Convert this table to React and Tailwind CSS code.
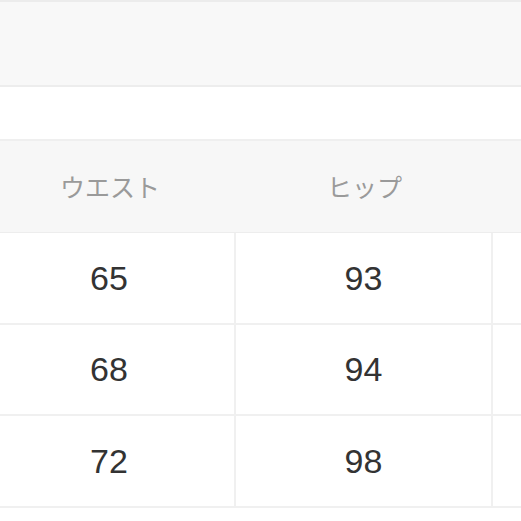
import React from 'react'

const rows = [
  { h: 'h-[92px]', cells: ['65', '93', ''] },
  { h: 'h-[91px]', cells: ['68', '94', ''] },
  { h: 'h-[92px]', cells: ['72', '98', ''] },
]

export default function App() {
  return (
    <div className="w-[521px] h-[521px] overflow-hidden bg-white" style={{ fontFamily: '"Liberation Sans", "Noto Sans CJK JP", sans-serif' }}>
      <div className="h-[2px] bg-[#ececec]" />
      <div className="h-[85px] bg-[#f8f8f8] border-b-2 border-[#ededed]" />
      <div className="h-[54px] bg-white border-b-2 border-[#efefef]" />
      <div className="-ml-[16px] w-[800px]">
        <div className="grid grid-cols-[252px_257px_257px] h-[92px] bg-[#f7f7f7] border-b border-[#ededed]">
          <div className="flex items-center justify-center text-[25px] text-[#9a9a9a]" style={{ fontFamily: '"Noto Sans CJK JP", sans-serif' }}>ウエスト</div>
          <div className="flex items-center justify-center text-[25px] text-[#9a9a9a]" style={{ fontFamily: '"Noto Sans CJK JP", sans-serif' }}>ヒップ</div>
          <div />
        </div>
        {rows.map((r, i) => (
          <div key={i} className={`grid grid-cols-[252px_257px_257px] ${r.h} border-b-2 border-[#f0f0f0]`}>
            {r.cells.map((c, j) => (
              <div key={j} className={`flex items-center justify-center text-[34px] text-[#333333] ${j < 2 ? 'border-r-2 border-[#f0f0f0]' : ''}`}>
                {c}
              </div>
            ))}
          </div>
        ))}
      </div>
    </div>
  )
}
